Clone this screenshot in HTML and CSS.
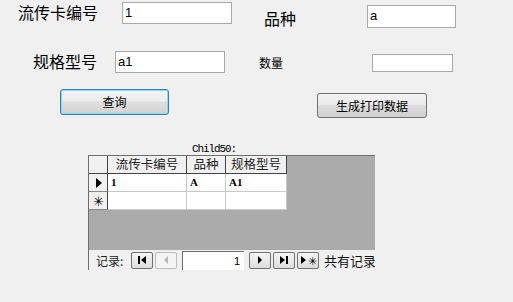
FILE: index.html
```html
<!DOCTYPE html>
<html>
<head>
<meta charset="utf-8">
<link rel="stylesheet" href="styles.css">
</head>
<body>
<div class="form">
  <div class="row row1">
    <span class="lbl lbl-card">流传卡编号</span>
    <div class="tb tb-card">1</div>
    <span class="lbl lbl-kind">品种</span>
    <div class="tb tb-kind">a</div>
  </div>
  <div class="row row2">
    <span class="lbl lbl-spec">规格型号</span>
    <div class="tb tb-spec">a1</div>
    <span class="lbl-small lbl-qty">数量</span>
    <div class="tb tb-qty"></div>
  </div>
  <div class="row row3">
    <button class="btn btn-query">查询</button>
    <button class="btn btn-gen">生成打印数据</button>
  </div>
  <div class="sub-caption">Child50:</div>
  <div class="subform">
    <div class="sheet">
      <div class="grid">
        <div class="cell sel hdr"></div>
        <div class="cell hdr">流传卡编号</div>
        <div class="cell hdr">品种</div>
        <div class="cell hdr">规格型号</div>

        <div class="cell sel"><span class="arrow"></span></div>
        <div class="cell data">1</div>
        <div class="cell data">A</div>
        <div class="cell data">A1</div>

        <div class="cell sel star">✳</div>
        <div class="cell data"></div>
        <div class="cell data"></div>
        <div class="cell data"></div>
      </div>
    </div>
    <div class="nav">
      <span class="nav-lbl">记录:</span>
      <span class="nbtn"><svg width="12" height="10" viewBox="0 0 12 10"><rect x="2" y="1" width="2" height="8" fill="#000"/><path d="M10 1 L5 5 L10 9 Z" fill="#000"/></svg></span>
      <span class="nbtn dis"><svg width="12" height="10" viewBox="0 0 12 10"><path d="M8 1 L4 5 L8 9 Z" fill="#b8b8b8"/></svg></span>
      <span class="nbox">1</span>
      <span class="nbtn"><svg width="12" height="10" viewBox="0 0 12 10"><path d="M4 1 L8 5 L4 9 Z" fill="#000"/></svg></span>
      <span class="nbtn"><svg width="12" height="10" viewBox="0 0 12 10"><path d="M2 1 L7 5 L2 9 Z" fill="#000"/><rect x="8" y="1" width="2" height="8" fill="#000"/></svg></span>
      <span class="nbtn newrec"><svg width="7" height="10" viewBox="0 0 7 10"><path d="M1 1 L6 5 L1 9 Z" fill="#000"/></svg><span class="nstar">✳</span></span>
      <span class="nav-total">共有记录数</span>
    </div>
  </div>
</div>
</body>
</html>
```

FILE: styles.css
```css
html, body {
  margin: 0;
  padding: 0;
  background: #f0f0f0;
  width: 513px;
  height: 302px;
  overflow: hidden;
}
.form {
  font-family: "Noto Sans CJK SC", "Noto Sans", sans-serif;
  color: #000;
}
.row {
  display: flex;
  align-items: flex-start;
}
.lbl {
  font-size: 16px;
  line-height: 18px;
  white-space: nowrap;
}
.lbl-small {
  font-size: 12px;
  line-height: 14px;
  white-space: nowrap;
}
.tb {
  box-sizing: border-box;
  background: #fff;
  border: 1px solid #a9a9a9;
  font-family: "Liberation Sans", sans-serif;
  font-size: 13px;
  line-height: 20px;
  padding-left: 2px;
}
.row1 { height: 51px; }
.lbl-card { margin-left: 18px; margin-top: 3px; width: 104px; }
.tb-card { margin-top: 2px; width: 110px; height: 22px; }
.lbl-kind { margin-left: 32px; margin-top: 9px; width: 103px; }
.tb-kind { margin-top: 5px; width: 89px; height: 23px; }

.row2 { height: 38px; }
.lbl-spec { margin-left: 33px; margin-top: 1px; width: 82px; }
.tb-spec { width: 110px; height: 22px; }
.lbl-qty { margin-left: 34px; margin-top: 5px; width: 113px; }
.tb-qty { margin-top: 3px; width: 81px; height: 18px; }

.row3 { height: 30px; }
.btn {
  box-sizing: border-box;
  font-family: "Noto Sans CJK SC", sans-serif;
  font-size: 12px;
  line-height: 14px;
  padding: 0;
  border-radius: 3px;
  background: linear-gradient(#f2f2f2 0%, #ebebeb 45%, #dddddd 50%, #cfcfcf 100%);
  color: #000;
}
.btn-query {
  margin-left: 60px;
  width: 109px;
  height: 26px;
  border: 1px solid #3c7fb1;
  box-shadow: inset 0 0 0 1px #8ed8f5;
  background: linear-gradient(#f4f4f4 0%, #ececec 45%, #dedede 50%, #d2d2d2 100%);
}
.btn-gen {
  margin-left: 148px;
  margin-top: 4px;
  width: 110px;
  height: 25px;
  border: 1px solid #707070;
}

.sub-caption {
  font-family: "Liberation Mono", monospace;
  font-size: 11px;
  letter-spacing: -1.1px;
  line-height: 12px;
  height: 12px;
  margin-left: 192px;
  margin-top: 24px;
}
.subform {
  margin-left: 88px;
  width: 287px;
  height: 115px;
  box-sizing: border-box;
  border-left: 1px solid #6d6d6d;
  border-top: 1px solid #6d6d6d;
  display: flex;
  flex-direction: column;
}
.sheet {
  background: #ababab;
  flex: 1;
}
.grid {
  display: grid;
  grid-template-columns: 19px 79px 39px 61px;
  grid-template-rows: 18px 18px 18px;
  width: 198px;
}
.cell {
  box-sizing: border-box;
  background: #fff;
  border-right: 1px solid #c8c8c8;
  border-bottom: 1px solid #c8c8c8;
  font-size: 12px;
  line-height: 17px;
  white-space: nowrap;
}
.hdr {
  background: #f0f0f0;
  border-right: 1px solid #444;
  border-bottom: 1px solid #444;
  text-align: center;
  color: #222;
  line-height: 16px;
  font-size: 12.5px;
}
.sel {
  background: #f0f0f0;
  border-right: 1px solid #444;
  border-bottom: 1px solid #888;
  display: flex;
  align-items: center;
  justify-content: center;
}
.sel.hdr { border-bottom: 1px solid #444; }
.arrow {
  width: 0; height: 0;
  border-top: 5px solid transparent;
  border-bottom: 5px solid transparent;
  border-left: 6px solid #000;
  margin-left: 1px;
}
.star {
  font-size: 13px;
  line-height: 17px;
  color: #000;
}
.data {
  font-family: "Liberation Serif", serif;
  font-weight: bold;
  font-size: 11px;
  padding-left: 3px;
}
.nav {
  height: 20px;
  background: #f0f0f0;
  display: flex;
  align-items: center;
  font-size: 12px;
  white-space: nowrap;
  overflow: hidden;
}
.nav-lbl {
  flex: none;
  margin-left: 7px;
  width: 35px;
  color: #222;
}
.nbtn {
  box-sizing: border-box;
  flex: none;
  width: 22px;
  height: 17px;
  border: 1px solid #707070;
  border-radius: 2px;
  background: linear-gradient(#f6f6f6, #dcdcdc);
  display: flex;
  align-items: center;
  justify-content: center;
  margin-right: 2px;
}
.nbtn.dis {
  border-color: #bdbdbd;
  background: #f4f4f4;
}
.nbox {
  box-sizing: border-box;
  flex: none;
  width: 62px;
  height: 19px;
  margin-left: 3px;
  margin-right: 5px;
  background: #fff;
  border-top: 1px solid #6d6d6d;
  border-left: 1px solid #6d6d6d;
  text-align: right;
  padding-right: 4px;
  font-family: "Liberation Sans", sans-serif;
  font-size: 11px;
  line-height: 18px;
}
.nstar { font-size: 11px; line-height: 12px; margin-left: 1px; }
.nav-total {
  flex: none;
  margin-left: 3px;
  font-size: 13px;
  color: #111;
}
```
